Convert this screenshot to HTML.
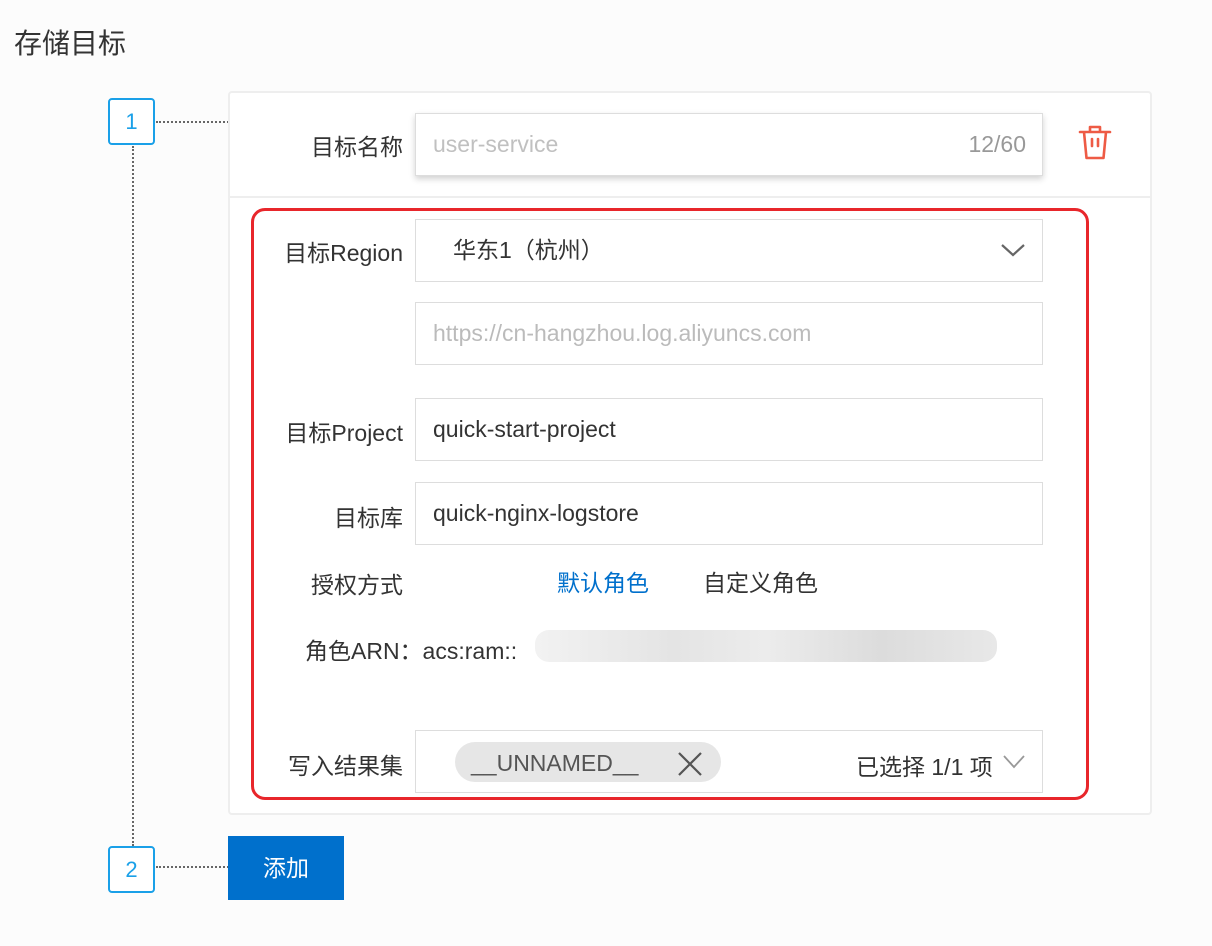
<!DOCTYPE html>
<html><head><meta charset="utf-8"><style>
*{margin:0;padding:0;box-sizing:border-box}
body{width:1212px;height:946px;background:#fcfcfc;font-family:"Liberation Sans","Noto Sans CJK SC",sans-serif;position:relative;overflow:hidden;color:#333}
.a{position:absolute}
.lbl{position:absolute;font-size:23px;color:#333;text-align:right;width:200px}
.inp{position:absolute;left:415px;width:628px;height:63px;border:1px solid #ddd;background:#fff;font-size:23px;padding-left:17px;line-height:61px}
.step{position:absolute;width:47px;height:47px;border:2px solid #1aa0e8;border-radius:4px;color:#1aa0e8;font-size:22px;text-align:center;line-height:43px;background:#fff}
</style></head><body>
<div class="a" style="left:14px;top:22px;font-size:28px;color:#333">存储目标</div>

<div class="step" style="left:108px;top:98px">1</div>
<div class="step" style="left:108px;top:846px">2</div>
<div class="a" style="left:132px;top:146px;height:700px;border-left:2px dotted #666"></div>
<div class="a" style="left:156px;top:121px;width:73px;border-top:2px dotted #666"></div>
<div class="a" style="left:156px;top:866px;width:73px;border-top:2px dotted #666"></div>

<div class="a" style="left:228px;top:91px;width:924px;height:724px;border:2px solid #eee;border-radius:4px;background:#fff"></div>
<div class="a" style="left:229px;top:196px;width:922px;border-top:2px solid #eee"></div>

<div class="lbl" style="left:203px;top:128px">目标名称</div>
<div class="inp" style="top:113px;height:63px;color:#c0c0c0;box-shadow:0 3px 6px rgba(0,0,0,.18)">user-service<span style="position:absolute;right:16px;color:#999">12/60</span></div>
<svg class="a" style="left:1076px;top:122px" width="38" height="40" viewBox="0 0 38 40" fill="none" stroke="#ee5b45" stroke-width="2.6" stroke-linejoin="round" stroke-linecap="round"><path d="M4 10H34M14 10V5H24V10M8 10L10.5 36H27.5L30 10M16 17V24M22 17V24"/></svg>

<div class="a" style="left:251px;top:208px;width:838px;height:592px;border:3px solid #e8262b;border-radius:14px"></div>

<div class="lbl" style="left:203px;top:234px">目标Region</div>
<div class="inp" style="top:219px;padding-left:37px">华东1（杭州）
<svg class="a" style="right:16px;top:22px" width="26" height="16" viewBox="0 0 26 16" fill="none" stroke="#666" stroke-width="2.2"><path d="M2 3L13 13L24 3"/></svg></div>
<div class="inp" style="top:302px;color:#bbb">https://cn-hangzhou.log.aliyuncs.com</div>

<div class="lbl" style="left:203px;top:414px">目标Project</div>
<div class="inp" style="top:398px">quick-start-project</div>
<div class="lbl" style="left:203px;top:499px">目标库</div>
<div class="inp" style="top:482px">quick-nginx-logstore</div>

<div class="lbl" style="left:203px;top:566px">授权方式</div>
<div class="a" style="left:557px;top:564px;font-size:23px;color:#0070cc">默认角色</div>
<div class="a" style="left:703px;top:564px;font-size:23px;color:#333">自定义角色</div>

<div class="a" style="left:305px;top:632px;font-size:23px;color:#333">角色ARN：acs:ram::</div>
<div class="a" style="left:535px;top:630px;width:462px;height:32px;border-radius:14px;background:linear-gradient(90deg,#f2f2f2,#e4e4e4 30%,#ececec 50%,#dcdcdc 75%,#e8e8e8)"></div>

<div class="lbl" style="left:203px;top:747px">写入结果集</div>
<div class="inp" style="top:730px;height:63px"></div>
<div class="a" style="left:455px;top:742px;width:266px;height:40px;border-radius:20px;background:#e6e6e6;font-size:23px;color:#555;line-height:42px;padding-left:16px">__UNNAMED__
<svg class="a" style="left:222px;top:9px" width="26" height="26" viewBox="0 0 26 26" stroke="#555" stroke-width="2.2"><path d="M2 2L24 24M24 2L2 24"/></svg></div>
<div class="a" style="left:856px;top:748px;font-size:23px;color:#333">已选择 1/1 项</div>
<svg class="a" style="left:1002px;top:754px" width="24" height="16" viewBox="0 0 24 16" fill="none" stroke="#999" stroke-width="1.8"><path d="M2 2L12 13L22 2"/></svg>

<div class="a" style="left:228px;top:836px;width:116px;height:64px;background:#0070cc;color:#fff;font-size:23px;text-align:center;line-height:64px">添加</div>
</body></html>
